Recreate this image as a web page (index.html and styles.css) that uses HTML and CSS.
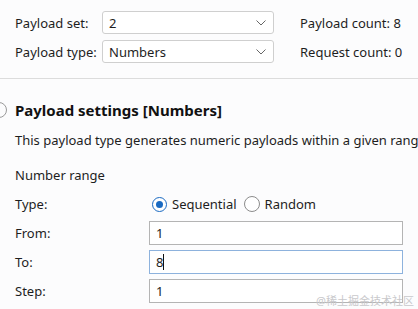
FILE: index.html
```html
<!DOCTYPE html>
<html lang="en">

<head>
    <meta charset="UTF-8">
    <meta name="viewport" content="width=device-width, initial-scale=1.0">
    <title>Payloads</title>

    <link rel="stylesheet" href="styles.css">

</head>
<body>

    <div class="top">
        <div class="toprow">
            <span class="toplabel">Payload set:</span>
            <div class="select">
                <span>2</span>
                <svg class="chevron" width="10" height="6" viewBox="0 0 10 6"><path d="M0.5 0.5 L5 5 L9.5 0.5" fill="none" stroke="#666" stroke-width="1"/></svg>
            </div>
            <span class="count">Payload count: 8</span>
        </div>
        <div class="toprow">
            <span class="toplabel">Payload type:</span>
            <div class="select">
                <span>Numbers</span>
                <svg class="chevron" width="10" height="6" viewBox="0 0 10 6"><path d="M0.5 0.5 L5 5 L9.5 0.5" fill="none" stroke="#666" stroke-width="1"/></svg>
            </div>
            <span class="count">Request count: 0</span>
        </div>
    </div>

    <div class="settings">
        <div class="heading">
            <span class="collapse"></span>
            <h2>Payload settings [Numbers]</h2>
        </div>
        <p class="desc">This payload type generates numeric payloads within a given range and format.</p>
        <div class="grouptitle">Number range</div>

        <div class="formrow typerow">
            <span class="formlabel">Type:</span>
            <div class="radios">
                <span class="radio checked"></span><span class="radiotext">Sequential</span>
                <span class="radio"></span><span class="radiotext">Random</span>
            </div>
        </div>
        <div class="formrow">
            <span class="formlabel">From:</span>
            <div class="field">1</div>
        </div>
        <div class="formrow">
            <span class="formlabel">To:</span>
            <div class="field focused">8<span class="caret"></span></div>
        </div>
        <div class="formrow">
            <span class="formlabel">Step:</span>
            <div class="field">1</div>
        </div>
    </div>

    <div class="watermark">@稀土掘金技术社区</div>

</body>
</html>
```

FILE: styles.css
```css
body {
    margin: 0;
    background-color: #fcfcfd;
    color: #1e1e1e;
    font-family: "Noto Sans", "Noto Sans CJK SC", sans-serif;
    font-size: 13px;
    overflow: hidden;
    width: 418px;
    height: 309px;
    position: relative;
}

.top {
    padding: 11px 0 15px 15px;
    border-bottom: 1px solid #dcdcdc;
    display: flex;
    flex-direction: column;
    gap: 6px;
}

.toprow {
    display: flex;
    align-items: center;
    height: 23px;
}

.toplabel {
    width: 87px;
}

.select {
    width: 172px;
    height: 23px;
    box-sizing: border-box;
    border: 1px solid #cfcfcf;
    border-radius: 3px;
    background-color: #fff;
    display: flex;
    align-items: center;
    justify-content: space-between;
    padding: 0 7px 0 6px;
}

.count {
    margin-left: 26px;
}

.settings {
    padding: 21px 0 0 15px;
}

.heading {
    display: flex;
    align-items: center;
    height: 20px;
}

.collapse {
    width: 14px;
    height: 14px;
    border: 1.5px solid #9a9a9a;
    border-radius: 50%;
    margin-left: -24px;
    margin-right: 8px;
}

h2 {
    margin: 0;
    font-size: 15px;
    font-weight: 700;
    color: #111;
}

.desc {
    margin: 11px 0 0 0;
    line-height: 18px;
    white-space: nowrap;
}

.grouptitle {
    margin-top: 17px;
    line-height: 18px;
}

.formrow {
    display: flex;
    align-items: center;
    margin-top: 5px;
}

.typerow {
    margin-top: 8px;
    margin-bottom: 2px;
}

.formlabel {
    width: 134px;
}

.radios {
    display: flex;
    align-items: center;
    height: 24px;
    margin-left: 3px;
}

.radio {
    width: 14px;
    height: 14px;
    border: 1px solid #8c8c8c;
    border-radius: 50%;
    background-color: #fff;
    position: relative;
    margin-right: 5px;
}

.radio.checked {
    border: 1.5px solid #1a6ac2;
    width: 13px;
    height: 13px;
}

.radio.checked::after {
    content: "";
    position: absolute;
    left: 3px;
    top: 3px;
    width: 7px;
    height: 7px;
    border-radius: 50%;
    background-color: #1a6ac2;
}

.radiotext {
    margin-right: 7px;
}

.field {
    width: 254px;
    height: 24px;
    box-sizing: border-box;
    border: 1px solid #b4b4b4;
    background-color: #fff;
    padding: 0 6px;
    display: flex;
    align-items: center;
}

.field.focused {
    border-color: #8db2dd;
}

.caret {
    width: 1px;
    height: 16px;
    background-color: #111;
}

.watermark {
    position: absolute;
    right: 4px;
    bottom: 1px;
    font-size: 11px;
    color: #c9c9cc;
}
```
